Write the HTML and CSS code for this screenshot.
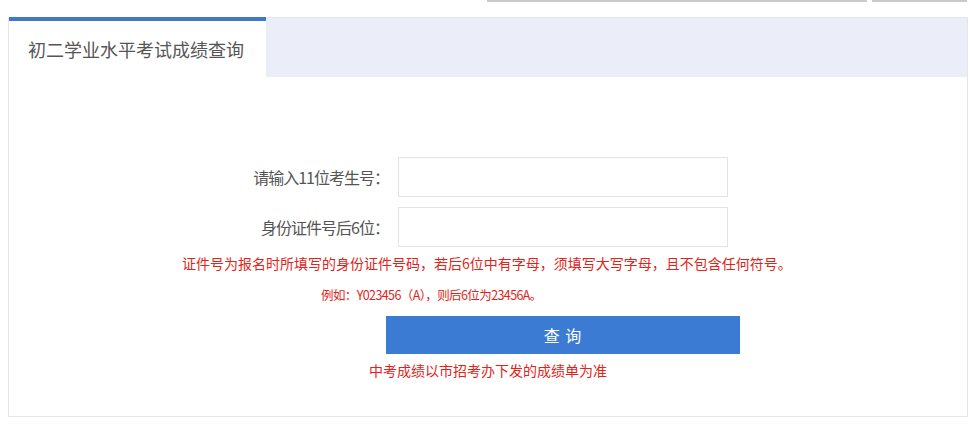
FILE: index.html
```html
<!DOCTYPE html>
<html lang="zh-CN">
<head>
    <meta charset="UTF-8">
    <meta name="viewport" content="width=device-width, initial-scale=1.0">
    <title>初二学业水平考试成绩查询</title>
    <link rel="stylesheet" href="styles.css">
</head>
<body>
    <div class="top-strip">
        <div class="strip-bar strip-long"></div>
        <div class="strip-bar strip-short"></div>
    </div>

    <div class="panel">
        <div class="panel-header">
            <div class="tab tab-active">初二学业水平考试成绩查询</div>
        </div>

        <div class="panel-body">
            <div class="form-row">
                <label class="form-label" for="examNo">请输入11位考生号：</label>
                <input class="form-input" type="text" id="examNo">
            </div>
            <div class="form-row form-row-second">
                <label class="form-label" for="idNo">身份证件号后6位：</label>
                <input class="form-input" type="text" id="idNo">
            </div>

            <p class="note note-main">证件号为报名时所填写的身份证件号码，若后6位中有字母，须填写大写字母，且不包含任何符号。</p>
            <p class="note note-example">例如：Y023456（A），则后6位为23456A。</p>

            <button class="button-query" type="button">查 询</button>

            <p class="note note-bottom">中考成绩以市招考办下发的成绩单为准</p>
        </div>
    </div>
</body>
</html>
```

FILE: styles.css
```css
* {
    margin: 0;
    padding: 0;
    box-sizing: border-box;
    font-family: "Noto Sans CJK SC", "Noto Sans", sans-serif;
}
body {
    background-color: #fff;
    width: 972px;
}
.top-strip {
    display: flex;
    height: 2px;
    padding-left: 487px;
    gap: 5px;
}
.strip-bar {
    height: 2px;
    background-color: #c9c9c9;
}
.strip-long {
    width: 380px;
}
.strip-short {
    width: 95px;
}
.panel {
    margin: 15px 0 0 8px;
    width: 960px;
    border: 1px solid #e6e6e6;
    border-top: none;
}
.panel-header {
    display: flex;
    height: 60px;
    background-color: #ebeef8;
    border-top: 1px solid #e2e5ee;
}
.tab {
    width: 257px;
    margin-top: -1px;
    padding-left: 19px;
    display: flex;
    align-items: center;
    font-size: 18px;
    color: #555;
}
.tab-active {
    background-color: #fff;
    border-top: 4px solid #3f78c4;
}
.panel-body {
    display: flex;
    flex-direction: column;
    align-items: flex-start;
    padding: 80px 0 36px;
}
.form-row {
    display: flex;
    align-items: center;
    margin-left: 219px;
}
.form-row-second {
    margin-top: 10px;
}
.form-label {
    width: 161px;
    text-align: right;
    font-size: 16px;
    letter-spacing: -1px;
    color: #555;
    margin-right: 9px;
}
.form-input {
    width: 330px;
    height: 40px;
    border: 1px solid #e3e3e3;
    outline: none;
    padding: 0 10px;
    font-size: 14px;
}
.note {
    color: #e2231a;
    line-height: 20px;
}
.note-main {
    font-size: 14px;
    margin: 6px 0 0 173px;
}
.note-example {
    font-size: 12.5px;
    letter-spacing: -0.6px;
    margin: 12px 0 0 312px;
}
.note-bottom {
    font-size: 14px;
    margin: 6px 0 0 360px;
}
.button-query {
    margin: 11px 0 0 377px;
    width: 354px;
    height: 38px;
    border: none;
    background-color: #3b7bd4;
    color: #fff;
    font-size: 16px;
    letter-spacing: 1px;
    cursor: pointer;
}
.button-query:hover {
    background-color: #336cbc;
}
```
